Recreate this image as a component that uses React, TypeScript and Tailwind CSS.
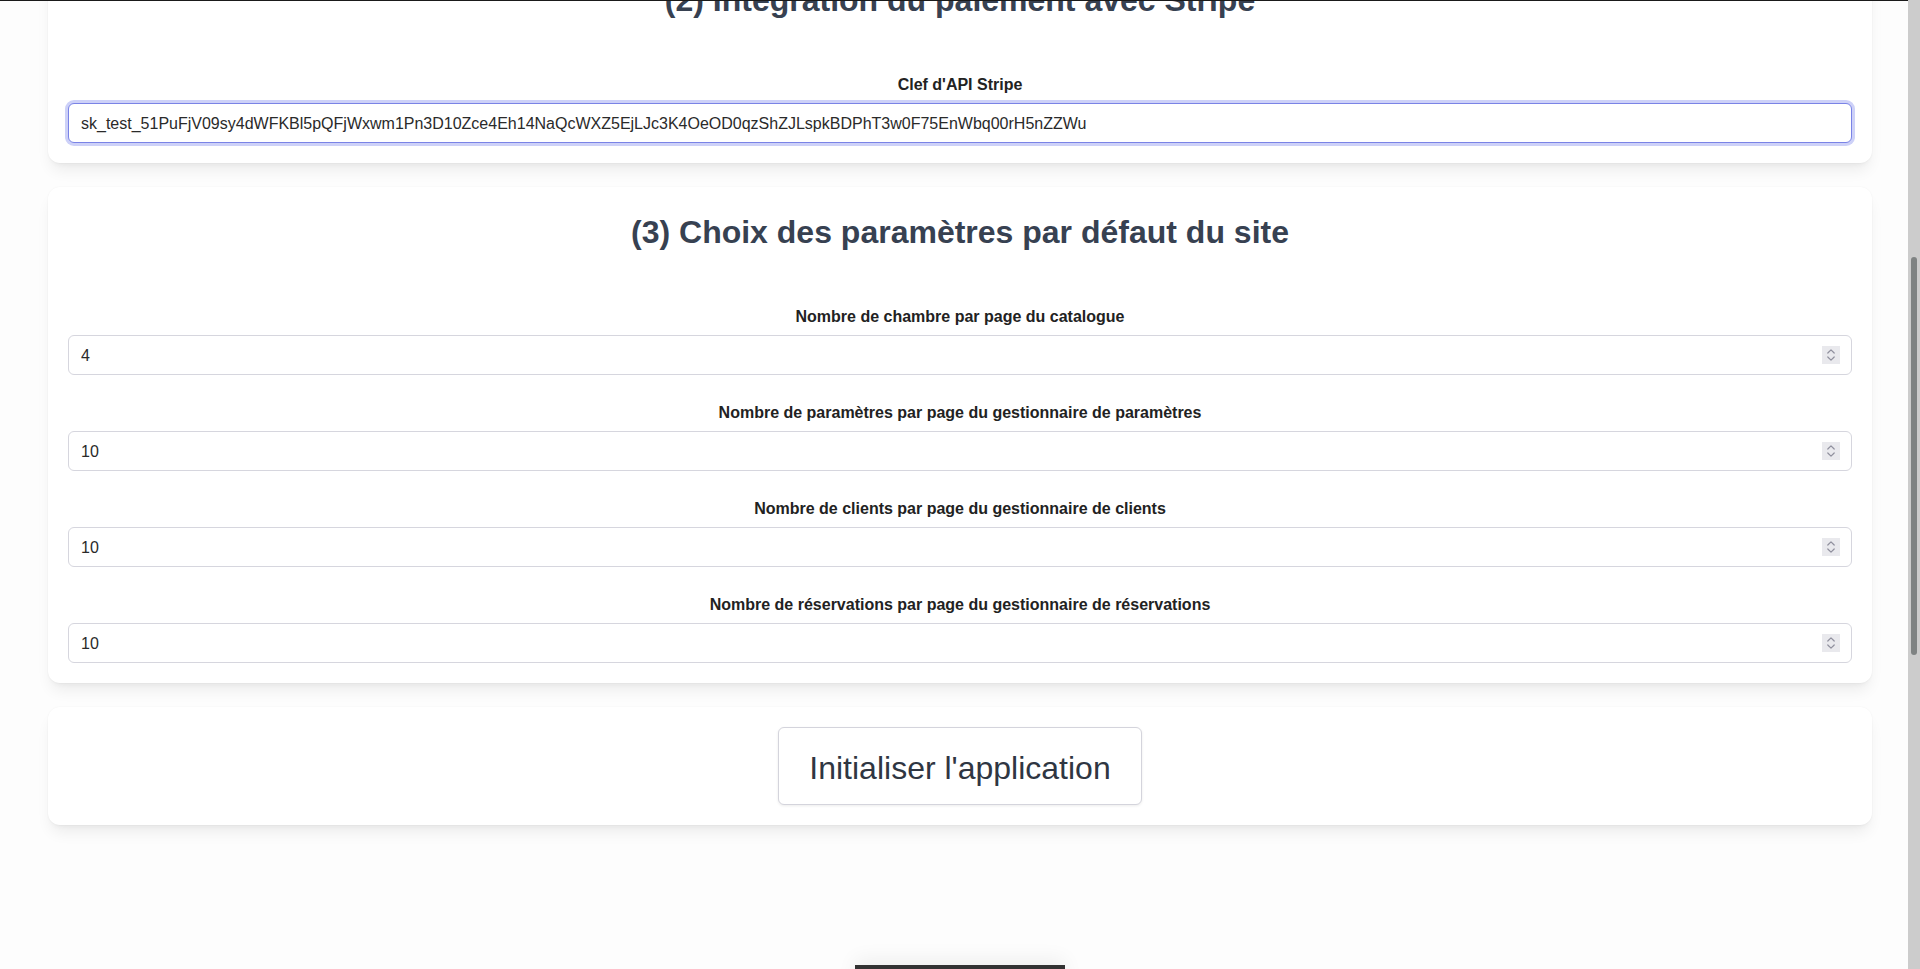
import { useLayoutEffect, useRef } from "react";

const FONT = "font-['Liberation_Sans',Arial,Helvetica,sans-serif]";

function Spinner() {
  return (
    <span className="pointer-events-none absolute right-3 top-1/2 flex h-[18px] w-[18px] -translate-y-1/2 items-center justify-center bg-[#e9e9ed]">
      <svg width="18" height="18" viewBox="0 0 18 18" fill="none" stroke="#8f8f9d" strokeWidth="1.2" strokeLinecap="round" strokeLinejoin="round">
        <path d="M5.8 7 L9 3.8 L12.2 7" />
        <path d="M5.8 11 L9 14.2 L12.2 11" />
      </svg>
    </span>
  );
}

function NumberField({ label, value }: { label: string; value: string }) {
  return (
    <div className="flex flex-col">
      <label className="mb-[6px] text-center text-base font-bold leading-6 text-[#222222]">{label}</label>
      <div className="relative">
        <input
          type="number"
          defaultValue={value}
          className="h-10 w-full rounded-md border border-[#d6d6de] bg-white px-3 pt-[2px] text-base text-[#2a2a2a] outline-none [appearance:textfield] [&::-webkit-inner-spin-button]:appearance-none [&::-webkit-outer-spin-button]:appearance-none"
        />
        <Spinner />
      </div>
    </div>
  );
}

function Card({ children, innerRef }: { children: React.ReactNode; innerRef?: React.Ref<HTMLDivElement> }) {
  return (
    <section
      ref={innerRef}
      className="rounded-xl bg-white p-5 shadow-[0_10px_15px_-3px_rgba(0,0,0,0.07),0_4px_6px_-4px_rgba(0,0,0,0.07),0_0_2px_rgba(0,0,0,0.05)]"
    >
      {children}
    </section>
  );
}

function Heading({ children }: { children: React.ReactNode }) {
  return <h2 className="mb-12 text-center text-[32px] font-bold leading-[50px] text-[#374151]">{children}</h2>;
}

export default function App() {
  const scrollRef = useRef<HTMLDivElement>(null);
  const card2Ref = useRef<HTMLDivElement>(null);

  useLayoutEffect(() => {
    const sc = scrollRef.current;
    const c2 = card2Ref.current;
    if (!sc || !c2) return;
    const top = c2.getBoundingClientRect().top - sc.getBoundingClientRect().top + sc.scrollTop;
    sc.scrollTop = top + 45;
  }, []);

  return (
    <div className={`${FONT} relative h-screen w-full`}>
      <div
        ref={scrollRef}
        className="h-screen w-full overflow-y-scroll bg-[#fdfdfd] [scrollbar-width:none] [&::-webkit-scrollbar]:hidden"
      >
        <header className="h-16 bg-[#2d2d2d]" />
        <main className="flex flex-col gap-6 px-12 pb-[140px] pt-6">
          <Card>
            <div className="h-[427px]" />
          </Card>

          <Card innerRef={card2Ref}>
            <Heading>(2) Intégration du paiement avec Stripe</Heading>
            <div className="flex flex-col">
              <label className="mb-[6px] text-center text-base font-bold leading-6 text-[#222222]">Clef d'API Stripe</label>
              <input
                type="text"
                defaultValue="sk_test_51PuFjV09sy4dWFKBl5pQFjWxwm1Pn3D10Zce4Eh14NaQcWXZ5EjLJc3K4OeOD0qzShZJLspkBDPhT3w0F75EnWbq00rH5nZZWu"
                className="h-10 w-full rounded-md border border-[#7a83e6] bg-white px-3 pt-[2px] text-base text-[#2a2a2a] outline-none ring-[3px] ring-[#cdd1f8]"
              />
            </div>
          </Card>

          <Card>
            <Heading>(3) Choix des paramètres par défaut du site</Heading>
            <div className="flex flex-col gap-[26px]">
              <NumberField label="Nombre de chambre par page du catalogue" value="4" />
              <NumberField label="Nombre de paramètres par page du gestionnaire de paramètres" value="10" />
              <NumberField label="Nombre de clients par page du gestionnaire de clients" value="10" />
              <NumberField label="Nombre de réservations par page du gestionnaire de réservations" value="10" />
            </div>
          </Card>

          <Card>
            <div className="flex justify-center">
              <button
                type="button"
                className="h-[78px] rounded-md border border-[#d4d4dc] bg-white px-[30px] pt-1 text-[32px] leading-[38px] text-[#2f3642] shadow-[0_1px_3px_rgba(0,0,0,0.08)]"
              >
                Initialiser l'application
              </button>
            </div>
          </Card>
        </main>
        <footer className="flex h-[768px] flex-col items-center">
          <div className="h-12 w-[210px] bg-[#333333] shadow-[0_-6px_20px_rgba(0,0,0,0.06)]" />
        </footer>
      </div>

      {/* overlay scrollbar */}
      <aside className="pointer-events-none absolute right-0 top-0 flex h-screen w-3 flex-col items-center bg-[#cccccc] pt-[257px]">
        <div className="h-[398px] w-1.5 rounded-full bg-[#7f8383]" />
      </aside>

      <div className="pointer-events-none absolute left-0 right-3 top-0 h-px bg-[#1a1a1a]" />
    </div>
  );
}
